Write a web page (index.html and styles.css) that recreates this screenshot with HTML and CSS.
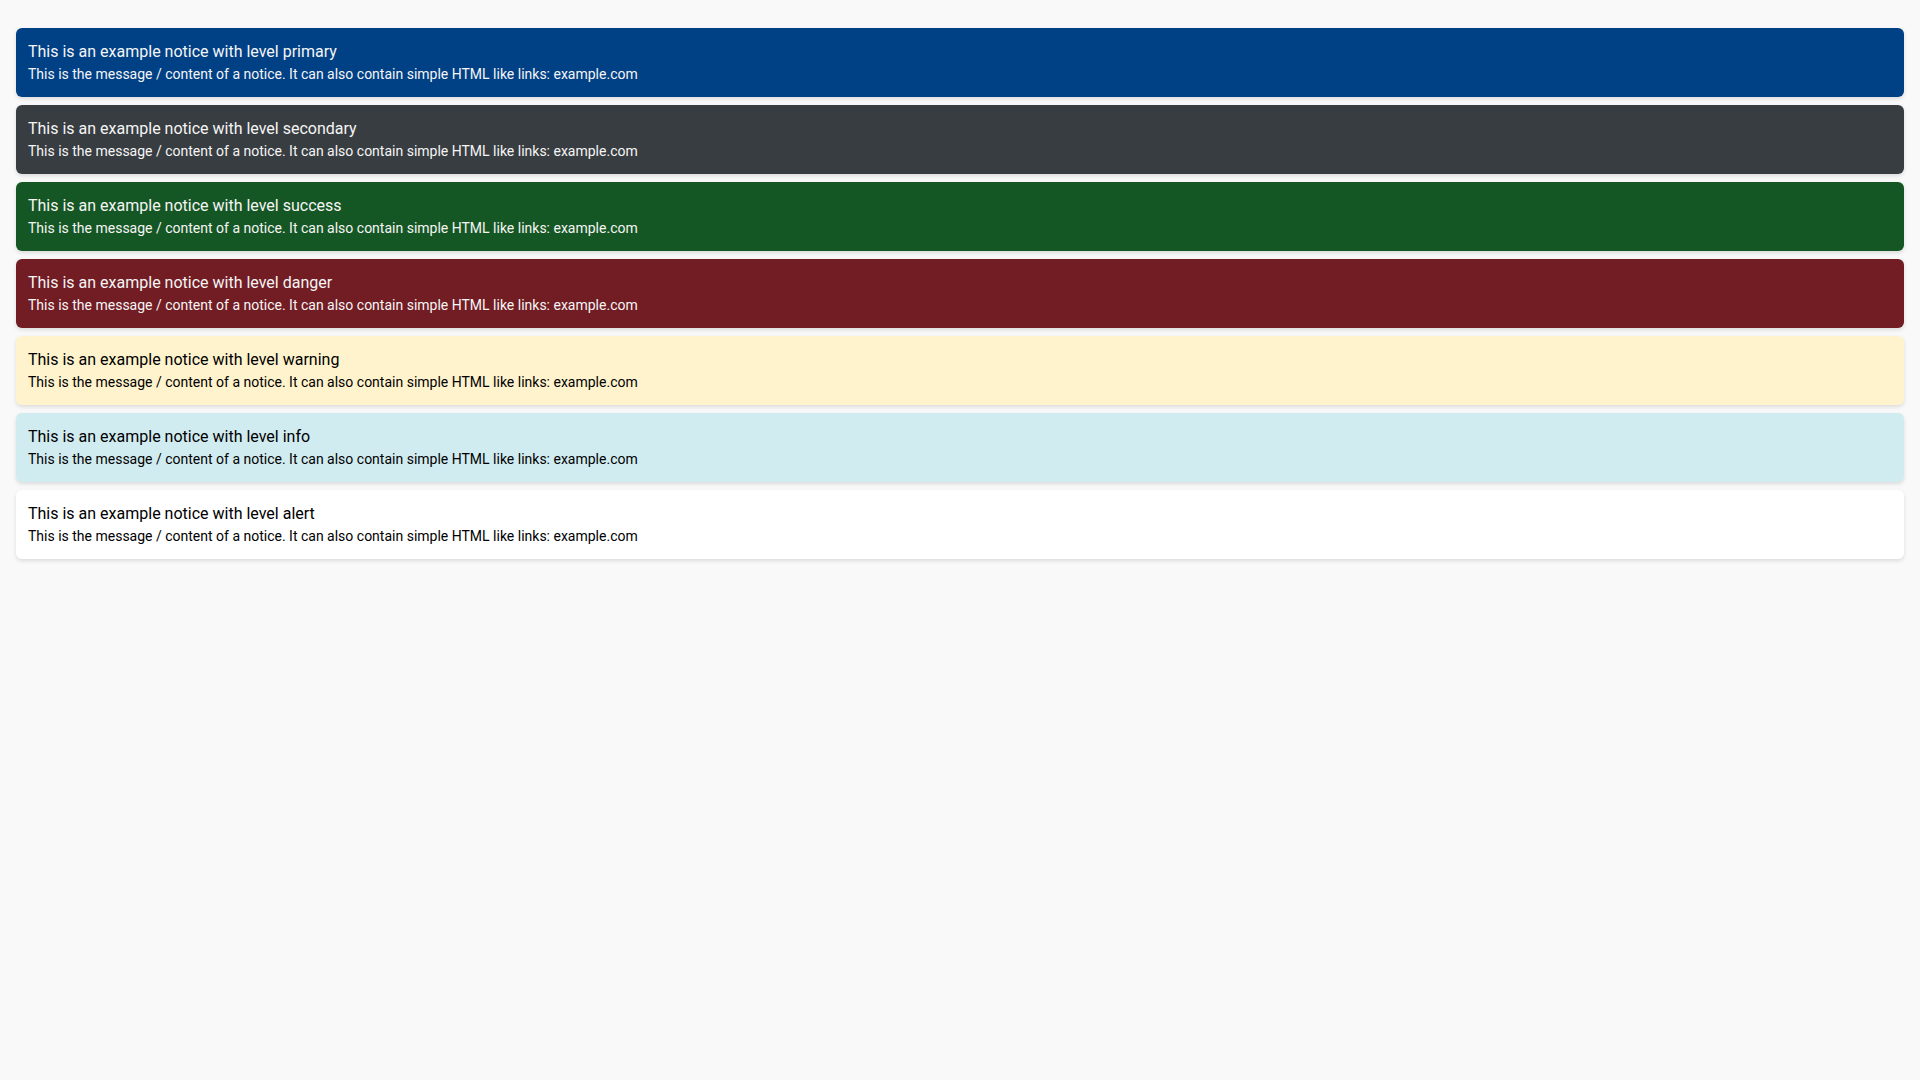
FILE: index.html
```html
<!DOCTYPE html>
<html lang="en">
<head>
<meta charset="utf-8">
<title>Notices</title>
<link rel="stylesheet" href="styles.css">
</head>
<body>
<main class="notices">
  <div class="notice notice-primary">
    <div class="notice-title">This is an example notice with level primary</div>
    <div class="notice-message">This is the message / content of a notice. It can also contain simple HTML like links: <a href="#">example.com</a></div>
  </div>
  <div class="notice notice-secondary">
    <div class="notice-title">This is an example notice with level secondary</div>
    <div class="notice-message">This is the message / content of a notice. It can also contain simple HTML like links: <a href="#">example.com</a></div>
  </div>
  <div class="notice notice-success">
    <div class="notice-title">This is an example notice with level success</div>
    <div class="notice-message">This is the message / content of a notice. It can also contain simple HTML like links: <a href="#">example.com</a></div>
  </div>
  <div class="notice notice-danger">
    <div class="notice-title">This is an example notice with level danger</div>
    <div class="notice-message">This is the message / content of a notice. It can also contain simple HTML like links: <a href="#">example.com</a></div>
  </div>
  <div class="notice notice-warning">
    <div class="notice-title">This is an example notice with level warning</div>
    <div class="notice-message">This is the message / content of a notice. It can also contain simple HTML like links: <a href="#">example.com</a></div>
  </div>
  <div class="notice notice-info">
    <div class="notice-title">This is an example notice with level info</div>
    <div class="notice-message">This is the message / content of a notice. It can also contain simple HTML like links: <a href="#">example.com</a></div>
  </div>
  <div class="notice notice-alert">
    <div class="notice-title">This is an example notice with level alert</div>
    <div class="notice-message">This is the message / content of a notice. It can also contain simple HTML like links: <a href="#">example.com</a></div>
  </div>
</main>
</body>
</html>
```
FILE: styles.css
```css
html, body {
  margin: 0;
  padding: 0;
}
body {
  background: #f9f9f9;
  font-family: Roboto, "Liberation Sans", sans-serif;
  color: #000;
}
.notices {
  display: flex;
  flex-direction: column;
  gap: 8px;
  padding: 28px 16px;
}
.notice {
  border-radius: 6px;
  padding: 12px 12px 13px;
  box-shadow: 0 2px 4px rgba(0, 0, 0, 0.12);
}
.notice-title {
  font-size: 16px;
  line-height: 24px;
}
.notice-message {
  font-size: 14px;
  line-height: 20px;
}
.notice-message a {
  color: inherit;
  text-decoration: none;
}
.notice-primary { background: #004085; color: #f5f5f5; }
.notice-secondary { background: #383d41; color: #f5f5f5; }
.notice-success { background: #155724; color: #f5f5f5; }
.notice-danger { background: #721c24; color: #f5f5f5; }
.notice-warning { background: #fff3cd; color: #000; }
.notice-info { background: #d1ecf1; color: #000; }
.notice-alert { background: #ffffff; color: #000; }
```
